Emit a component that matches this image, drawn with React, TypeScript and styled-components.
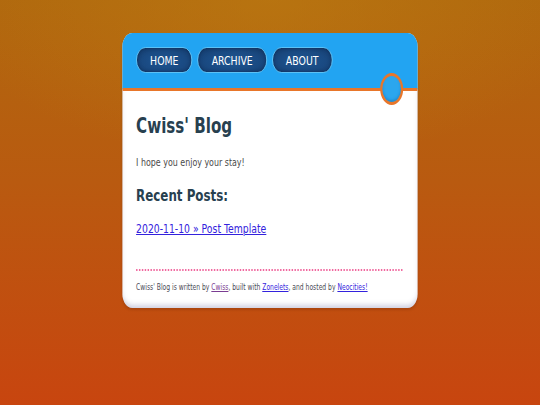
import React from "react";
import styled, { createGlobalStyle } from "styled-components";

const Global = createGlobalStyle`
  html, body { margin: 0; padding: 0; }
  body {
    width: 540px;
    height: 405px;
    overflow: hidden;
    font-family: "DejaVu Sans", Verdana, sans-serif;
    background:
      radial-gradient(ellipse 60% 40% at 50% 0%, rgba(190,125,18,0.55), rgba(190,125,18,0) 100%),
      linear-gradient(to bottom, #b0680e 0%, #b95a10 45%, #c8450f 100%);
  }
`;

const Page = styled.div`
  display: flex;
  justify-content: center;
  padding-top: 33px;
`;

const Card = styled.div`
  width: 410px;
  flex-shrink: 0;
  transform: scaleX(0.72);
  transform-origin: top center;
  background: #ffffff;
  border-radius: 14px;
  box-shadow: inset 0 -5px 6px -2px rgba(120, 120, 170, 0.35), 0 2px 3px rgba(0,0,0,0.12);
`;

const Header = styled.header`
  position: relative;
  height: 58px;
  box-sizing: border-box;
  background: #22a4f2;
  border-radius: 14px 14px 0 0;
  border-bottom: 3px solid #e8762a;
  padding: 14px 20px 0 19px;
  display: flex;
  align-items: flex-start;
  gap: 7px;
`;

const NavButton = styled.a`
  display: flex;
  align-items: center;
  justify-content: center;
  height: 26px;
  box-sizing: border-box;
  padding: 0 18.5px;
  border: 1.5px solid #66c6f6;
  border-radius: 13px;
  background: radial-gradient(ellipse at 50% 55%, #1d5592 0%, #1a4a82 55%, #143a68 100%);
  box-shadow: inset 0 0 4px rgba(10, 30, 70, 0.7);
  color: #ffffff;
  font-size: 13px;
  text-decoration: none;
`;

const Knob = styled.div`
  position: absolute;
  right: 20px;
  bottom: -17px;
  width: 26px;
  height: 26px;
  border-radius: 50%;
  background: #2ba6ee;
  border: 3px solid #e8762a;
  box-shadow: inset 0 -2px 3px rgba(0, 60, 120, 0.25);
`;

const Main = styled.main`
  padding: 23px 21px 16px 19px;
  display: flex;
  flex-direction: column;
`;

const Title = styled.h1`
  margin: 0;
  font-size: 21px;
  line-height: 24px;
  font-weight: bold;
  color: #27404f;
`;

const Intro = styled.p`
  margin: 18px 0 0;
  font-size: 11px;
  line-height: 14px;
  color: #4a4a4a;
`;

const SubTitle = styled.h2`
  margin: 16px 0 0;
  font-size: 16.5px;
  line-height: 20px;
  font-weight: bold;
  color: #27404f;
`;

const PostList = styled.ul`
  list-style: none;
  margin: 12px 0 0;
  padding: 0;
`;

const PostLink = styled.a`
  font-size: 12.9px;
  line-height: 15px;
  color: #3322dd;
  text-decoration: underline;
`;

const Divider = styled.hr`
  margin: 32px 0 0;
  border: none;
  border-top: 2px dotted #f0689f;
  height: 0;
`;

const Footer = styled.footer`
  margin-top: 11px;
  font-size: 8.4px;
  line-height: 10px;
  color: #4a4a55;
  white-space: nowrap;
`;

const FootLink = styled.a<{ $visited?: boolean }>`
  color: ${(p) => (p.$visited ? "#7a3c92" : "#3322dd")};
  text-decoration: underline;
`;

export default function App() {
  return (
    <>
      <Global />
      <Page>
        <Card>
          <Header>
            <NavButton href="#">HOME</NavButton>
            <NavButton href="#">ARCHIVE</NavButton>
            <NavButton href="#">ABOUT</NavButton>
            <Knob />
          </Header>
          <Main>
            <Title>Cwiss' Blog</Title>
            <Intro>I hope you enjoy your stay!</Intro>
            <SubTitle>Recent Posts:</SubTitle>
            <PostList>
              <li>
                <PostLink href="#">2020-11-10 » Post Template</PostLink>
              </li>
            </PostList>
            <Divider />
            <Footer>
              Cwiss' Blog is written by <FootLink $visited href="#">Cwiss</FootLink>, built with{" "}
              <FootLink href="#">Zonelets</FootLink>, and hosted by{" "}
              <FootLink href="#">Neocities!</FootLink>
            </Footer>
          </Main>
        </Card>
      </Page>
    </>
  );
}
